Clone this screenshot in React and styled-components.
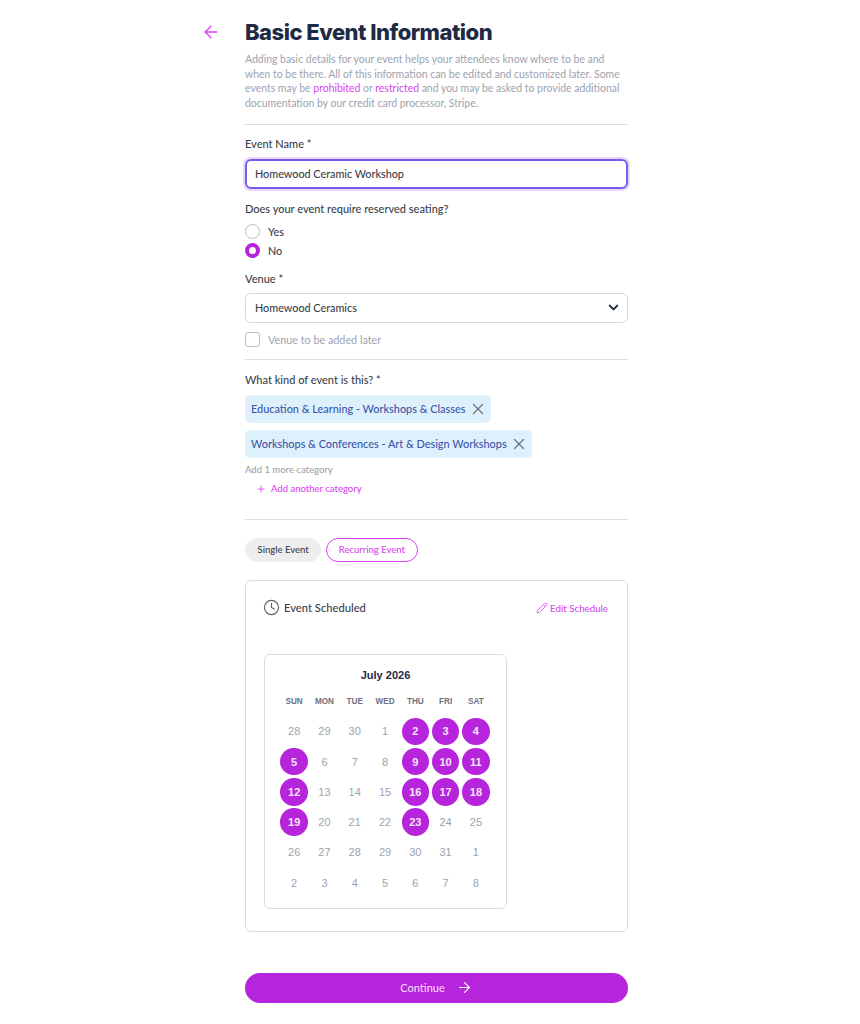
import React from 'react';
import styled, { createGlobalStyle } from 'styled-components';
import { ArrowLeft, ArrowRight, ChevronDown, Clock, Pencil, Plus, X } from 'lucide-react';

const purple = '#b625dc';
const pink = '#d946ef';
const ink = '#1f2a44';
const text = '#3a3f4b';
const muted = '#9ca3af';
const line = '#dddddd';

const GlobalStyle = createGlobalStyle`
    html, body {
        margin: 0;
        background: #ffffff;
        font-family: "Lato", "Noto Sans", sans-serif;
    }
`;

const Page = styled.div`
    display: grid;
    grid-template-columns: 41px 383px;
    padding: 18px 0 20px 204px;
`;

const BackButton = styled.div`
    color: ${pink};
    height: 28px;
    margin-left: -3px;
    display: flex;
    align-items: center;
`;

const Main = styled.main`
    display: flex;
    flex-direction: column;
    min-width: 0;
`;

const Title = styled.h1`
    margin: 0;
    font-family: "Inter", "Noto Sans", sans-serif;
    font-size: 22px;
    line-height: 28px;
    font-weight: 800;
    letter-spacing: -0.5px;
    color: ${ink};
`;

const Intro = styled.p`
    margin: 6px 0 0;
    font-size: 10.45px;
    line-height: 14.7px;
    color: ${muted};
    white-space: nowrap;
    a {
        color: ${pink};
        text-decoration: none;
    }
`;

const Divider = styled.hr`
    width: 100%;
    margin: ${props => props.$top}px 0 ${props => props.$bottom}px;
    border: 0;
    border-top: 1px solid ${line};
`;

const Label = styled.div`
    font-size: 11px;
    line-height: 14px;
    font-weight: 500;
    color: ${text};
    margin-bottom: ${props => props.$gap}px;
`;

const NameInput = styled.div`
    box-sizing: border-box;
    height: 30px;
    display: flex;
    align-items: center;
    padding: 0 8px;
    border: 2px solid #6d5ef0;
    border-radius: 6px;
    box-shadow: 0 0 0 2px #efd3f8;
    font-size: 10.8px;
    font-weight: 500;
    color: ${text};
    margin-bottom: 13px;
`;

const RadioRow = styled.div`
    display: flex;
    align-items: center;
    gap: 8px;
    height: 19px;
    font-size: 10.8px;
    font-weight: 500;
    color: ${text};
`;

const RadioDot = styled.span`
    box-sizing: border-box;
    width: 15px;
    height: 15px;
    border-radius: 50%;
    background: #ffffff;
    border: ${props => (props.$on ? `4px solid ${purple}` : '1px solid #bdbdbd')};
`;

const RadioGroup = styled.div`
    display: flex;
    flex-direction: column;
    margin-bottom: 12px;
`;

const Select = styled.div`
    box-sizing: border-box;
    height: 30px;
    display: flex;
    align-items: center;
    justify-content: space-between;
    padding: 0 6px 0 9px;
    border: 1px solid #d8d8d8;
    border-radius: 6px;
    font-size: 10.8px;
    font-weight: 500;
    color: ${text};
    svg {
        color: ${ink};
    }
`;

const CheckRow = styled.div`
    display: flex;
    align-items: center;
    gap: 8px;
    margin-top: 9px;
    font-size: 10.8px;
    color: ${muted};
`;

const CheckBox = styled.span`
    box-sizing: border-box;
    width: 15px;
    height: 15px;
    border: 1px solid #bdbdbd;
    border-radius: 3px;
`;

const Chips = styled.div`
    display: flex;
    flex-direction: column;
    align-items: flex-start;
    gap: 7px;
`;

const Chip = styled.div`
    height: 28px;
    display: flex;
    align-items: center;
    gap: 3px;
    padding: 0 4px 0 6px;
    border-radius: 5px;
    background: #dff0fd;
    font-size: 10.9px;
    font-weight: 500;
    color: #3a57a8;
    white-space: nowrap;
    svg {
        color: #6b7280;
    }
`;

const Hint = styled.div`
    margin-top: 6px;
    font-size: 9.5px;
    line-height: 12px;
    font-weight: 500;
    color: ${muted};
`;

const AddLink = styled.div`
    display: flex;
    align-items: center;
    gap: 5px;
    margin: 7px 0 0 11px;
    font-size: 9.5px;
    line-height: 12px;
    font-weight: 500;
    color: ${pink};
`;

const Tabs = styled.div`
    display: flex;
    gap: 5px;
`;

const Tab = styled.div`
    box-sizing: border-box;
    height: 24px;
    display: flex;
    align-items: center;
    padding: 0 11.5px;
    border-radius: 12px;
    font-size: 9.5px;
    font-weight: 500;
    white-space: nowrap;
    color: ${props => (props.$active ? text : pink)};
    background: ${props => (props.$active ? '#eeeeee' : '#ffffff')};
    border: 1px solid ${props => (props.$active ? '#eeeeee' : pink)};
`;

const Card = styled.section`
    box-sizing: border-box;
    height: 352px;
    margin-top: 18px;
    padding: 19px 19px 0 18px;
    border: 1px solid #dcdcdc;
    border-radius: 6px;
`;

const CardHeader = styled.div`
    display: flex;
    align-items: center;
    justify-content: space-between;
    height: 16px;
`;

const Scheduled = styled.div`
    display: flex;
    align-items: center;
    gap: 4px;
    font-size: 11.2px;
    font-weight: 500;
    color: ${text};
    svg {
        margin-left: -1px;
        color: #5f6368;
    }
`;

const EditLink = styled.div`
    display: flex;
    align-items: center;
    gap: 2px;
    font-size: 9.7px;
    font-weight: 500;
    color: ${pink};
`;

const Calendar = styled.div`
    box-sizing: border-box;
    width: 243px;
    height: 255px;
    margin-top: 38px;
    padding: 12px 14px 0;
    border: 1px solid #dcdcdc;
    border-radius: 6px;
    font-family: "Liberation Sans", Arial, sans-serif;
`;

const Month = styled.div`
    text-align: center;
    font-size: 11px;
    line-height: 16px;
    font-weight: 700;
    color: ${ink};
`;

const Grid = styled.div`
    display: grid;
    grid-template-columns: repeat(7, 30.3px);
    grid-auto-rows: 30.3px;
    margin-top: 3px;
    justify-items: center;
    align-items: center;
`;

const WeekDay = styled.div`
    height: 24px;
    padding-top: 2px;
    box-sizing: border-box;
    display: flex;
    align-items: center;
    font-size: 8.2px;
    font-weight: 700;
    color: #6b7280;
`;

const Day = styled.div`
    width: 27.5px;
    height: 27.5px;
    display: flex;
    align-items: center;
    justify-content: center;
    border-radius: 50%;
    font-size: 11px;
    font-weight: ${props => (props.$on ? 700 : 400)};
    color: ${props => (props.$on ? '#f6e4fb' : muted)};
    background: ${props => (props.$on ? purple : 'transparent')};
`;

const Continue = styled.button`
    height: 30px;
    margin-top: 41px;
    display: flex;
    align-items: center;
    justify-content: center;
    gap: 11px;
    border: 0;
    border-radius: 15px;
    background: ${purple};
    color: #f3d9fa;
    font-family: "Lato", sans-serif;
    font-size: 11px;
    font-weight: 500;
    svg {
        color: #ffffff;
    }
`;

const weekDays = ['SUN', 'MON', 'TUE', 'WED', 'THU', 'FRI', 'SAT'];
const days = [
    28, 29, 30, 1, 2, 3, 4,
    5, 6, 7, 8, 9, 10, 11,
    12, 13, 14, 15, 16, 17, 18,
    19, 20, 21, 22, 23, 24, 25,
    26, 27, 28, 29, 30, 31, 1,
    2, 3, 4, 5, 6, 7, 8,
];
// index into days, the previous and next month repeat some numbers
const selected = [4, 5, 6, 7, 11, 12, 13, 14, 18, 19, 20, 21, 25];

export default function App() {
    return (
        <Page>
            <GlobalStyle />
            <BackButton>
                <ArrowLeft size={20} strokeWidth={1.8} />
            </BackButton>
            <Main>
                <Title>Basic Event Information</Title>
                <Intro>
                    Adding basic details for your event helps your attendees know where to be and<br />
                    when to be there. All of this information can be edited and customized later. Some<br />
                    events may be <a href="#p">prohibited</a> or <a href="#r">restricted</a> and you may be asked to provide additional<br />
                    documentation by our credit card processor, Stripe.
                </Intro>
                <Divider $top={13} $bottom={12} />
                <Label $gap={8}>Event Name *</Label>
                <NameInput>Homewood Ceramic Workshop</NameInput>
                <Label $gap={6}>Does your event require reserved seating?</Label>
                <RadioGroup>
                    <RadioRow><RadioDot />Yes</RadioRow>
                    <RadioRow><RadioDot $on />No</RadioRow>
                </RadioGroup>
                <Label $gap={7}>Venue *</Label>
                <Select>
                    Homewood Ceramics
                    <ChevronDown size={15} strokeWidth={3.2} />
                </Select>
                <CheckRow><CheckBox />Venue to be added later</CheckRow>
                <Divider $top={12} $bottom={13} />
                <Label $gap={8}>What kind of event is this? *</Label>
                <Chips>
                    <Chip>Education &amp; Learning - Workshops &amp; Classes<X size={18} strokeWidth={1.6} /></Chip>
                    <Chip>Workshops &amp; Conferences - Art &amp; Design Workshops<X size={18} strokeWidth={1.6} /></Chip>
                </Chips>
                <Hint>Add 1 more category</Hint>
                <AddLink><Plus size={10} strokeWidth={2} />Add another category</AddLink>
                <Divider $top={24} $bottom={18} />
                <Tabs>
                    <Tab $active>Single Event</Tab>
                    <Tab>Recurring Event</Tab>
                </Tabs>
                <Card>
                    <CardHeader>
                        <Scheduled><Clock size={17} strokeWidth={1.6} />Event Scheduled</Scheduled>
                        <EditLink><Pencil size={12} strokeWidth={1.7} />Edit Schedule</EditLink>
                    </CardHeader>
                    <Calendar>
                        <Month>July 2026</Month>
                        <Grid>
                            {weekDays.map(name => <WeekDay key={name}>{name}</WeekDay>)}
                            {days.map((day, i) => (
                                <Day key={i} $on={selected.includes(i)}>{day}</Day>
                            ))}
                        </Grid>
                    </Calendar>
                </Card>
                <Continue>
                    Continue
                    <ArrowRight size={17} strokeWidth={1.6} />
                </Continue>
            </Main>
        </Page>
    );
}
